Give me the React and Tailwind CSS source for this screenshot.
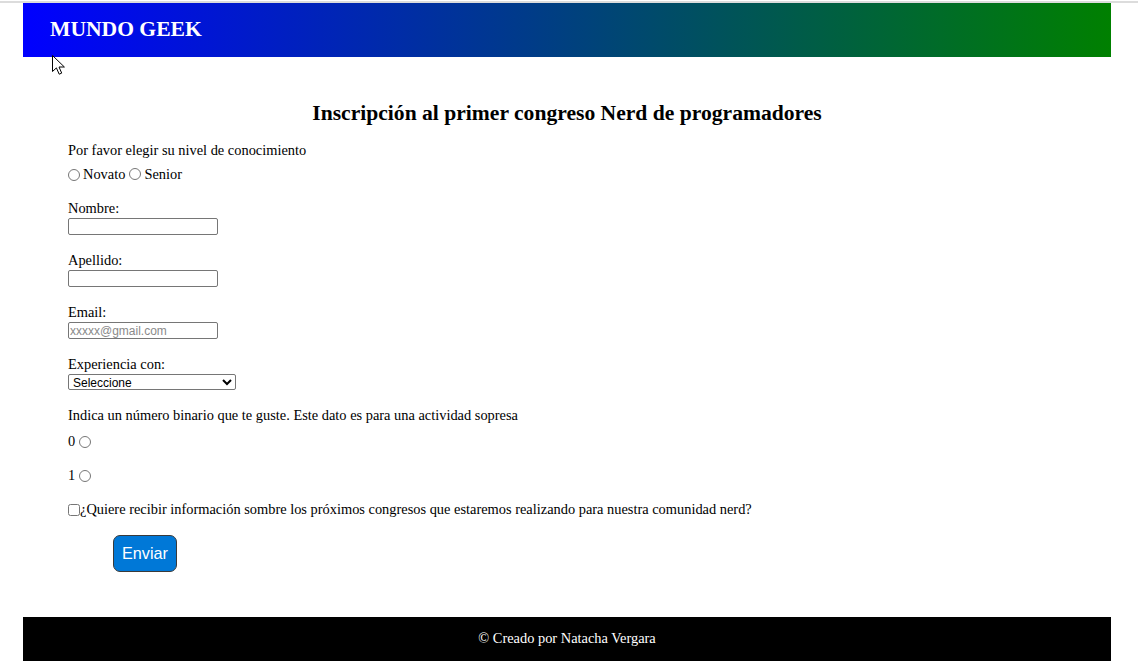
import React from "react";

function Radio({ name }) {
  return (
    <input
      type="radio"
      name={name}
      className="m-0 inline-block h-[12px] w-[12px] align-[-1px]"
    />
  );
}

function Field({ label, placeholder }) {
  return (
    <div className="mt-[17px]">
      <label className="block h-[17px] leading-[17px]">{label}</label>
      <input
        type="text"
        placeholder={placeholder}
        className="mt-px block h-[17px] w-[150px] rounded-[2px] border border-[#767676] bg-white px-[1px] font-['Liberation_Sans',Arial,sans-serif] text-[12px] leading-[15px] outline-none placeholder:text-[#8a8a8a]"
      />
    </div>
  );
}

export default function App() {
  return (
    <div className="relative min-h-[664px] bg-white font-['Liberation_Serif','Times_New_Roman',serif] text-[14.4px] text-black">
      <div className="h-px" />
      <div className="h-[2px] bg-[#dcdcdc]" />

      <div className="ml-[23px] w-[1088px]">
        <header className="flex h-[54px] items-center bg-[linear-gradient(to_right,#0000ff,#008000)] pb-px pl-[27px]">
          <h1 className="text-[21.6px] font-bold leading-none text-white">MUNDO GEEK</h1>
        </header>

        <main className="px-[45px]">
          <h2 className="mt-[43px] h-[26px] text-center text-[21.6px] font-bold leading-[26px]">
            Inscripción al primer congreso Nerd de programadores
          </h2>

          <p className="mt-[16px] h-[17px] leading-[17px]">Por favor elegir su nivel de conocimiento</p>
          <div className="mt-[7px] flex h-[17px] items-center leading-[17px]">
            <Radio name="nivel" />
            <span className="ml-[3px]">Novato</span>
            <span className="ml-[4px]"><Radio name="nivel" /></span>
            <span className="ml-[3px]">Senior</span>
          </div>

          <Field label="Nombre:" />
          <Field label="Apellido:" />
          <Field label="Email:" placeholder="xxxxx@gmail.com" />

          <div className="mt-[17px]">
            <label className="block h-[17px] leading-[17px]">Experiencia con:</label>
            <select className="mt-px block h-[16px] w-[168px] rounded-[2px] border border-[#767676] bg-white font-['Liberation_Sans',Arial,sans-serif] text-[12px] leading-[14px] text-black">
              <option>Seleccione</option>
              <option>HTML</option>
              <option>CSS</option>
              <option>JavaScript</option>
            </select>
          </div>

          <p className="mt-[17px] h-[17px] leading-[17px]">
            Indica un número binario que te guste. Este dato es para una actividad sopresa
          </p>
          <div className="mt-[9px] flex h-[17px] items-center gap-[4px] leading-[17px]">
            <span>0</span>
            <Radio name="binario" />
          </div>
          <div className="mt-[17px] flex h-[17px] items-center gap-[4px] leading-[17px]">
            <span>1</span>
            <Radio name="binario" />
          </div>

          <div className="mt-[17px] flex h-[17px] items-center leading-[17px]">
            <input type="checkbox" className="m-0 h-[12px] w-[12px]" />
            <span>¿Quiere recibir información sombre los próximos congresos que estaremos realizando para nuestra comunidad nerd?</span>
          </div>

          <button
            type="submit"
            className="mt-[17px] ml-[45px] flex h-[37px] w-[64px] items-center justify-center rounded-[7px] border border-[#3a3a3a] bg-[#0078d7] font-['Liberation_Sans',Arial,sans-serif] text-[16.2px] text-white"
          >
            Enviar
          </button>
        </main>

        <footer className="mt-[45px] flex h-[44px] items-center justify-center bg-black text-[14.4px] text-white">
          © Creado por Natacha Vergara
        </footer>
      </div>

      <svg
        className="absolute left-[52px] top-[55px]"
        width="14"
        height="20"
        viewBox="0 0 14 20"
      >
        <path
          d="M0.5 0.5 L0.5 16.5 L4.4 12.9 L7.2 19.2 L9.7 18.1 L7 12 L12.4 12 Z"
          fill="#fff"
          stroke="#000"
          strokeWidth="1"
          strokeLinejoin="miter"
        />
      </svg>
    </div>
  );
}
